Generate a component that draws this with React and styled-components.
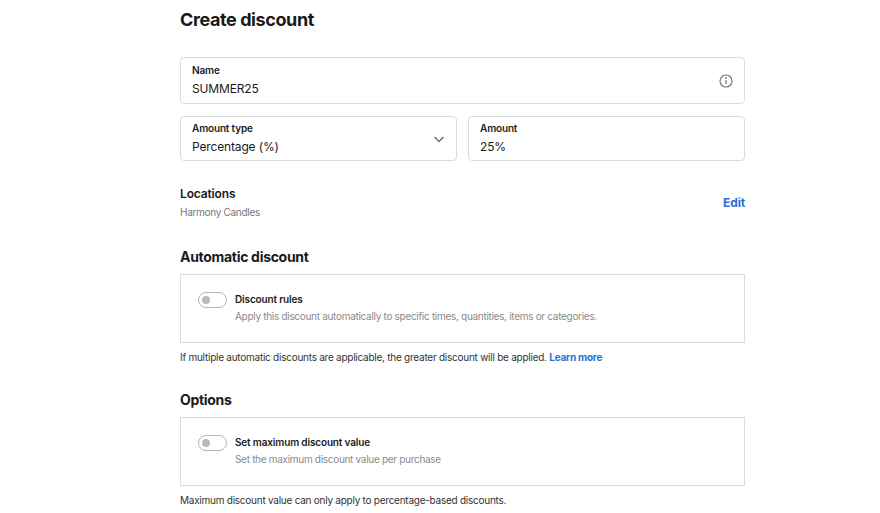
import React from "react";
import styled, { createGlobalStyle } from "styled-components";

const Global = createGlobalStyle`
  body { margin: 0; background: #fff; font-family: Inter, "Noto Sans", sans-serif; color: #1a1a1a; letter-spacing: -0.15px; }
`;
const Page = styled.div`width: 565px; margin-left: 180px; padding-top: 9px; display: flex; flex-direction: column;`;
const Title = styled.h1`font-size: 18px; font-weight: 700; margin: 0 0 26px; line-height: 22px; letter-spacing: -0.4px;`;
const Field = styled.div`
  border: 1px solid #dcdcdc; border-radius: 4px; height: 45px; box-sizing: border-box;
  padding: 6px 11px; display: flex; align-items: center; justify-content: space-between; flex: 1;
`;
const FieldText = styled.div`display: flex; flex-direction: column; gap: 4px;`;
const Label = styled.div`font-size: 10px; font-weight: 600; line-height: 13px;`;
const Value = styled.div`font-size: 12px; line-height: 16px;`;
const Row = styled.div`display: flex; gap: 11px; margin-top: 12px;`;
const Locations = styled.div`display: flex; justify-content: space-between; align-items: center; margin-top: 25px;`;
const LocTitle = styled.div`font-size: 12px; font-weight: 600; line-height: 16px;`;
const LocSub = styled.div`font-size: 10px; color: #777; margin-top: 4px; line-height: 13px; letter-spacing: -0.3px;`;
const Edit = styled.a`font-size: 12px; font-weight: 700; color: #2b6fd6;`;
const Heading = styled.h2`font-size: 14px; font-weight: 700; margin: ${p => p.$mt}px 0 8px; line-height: 18px; letter-spacing: -0.3px;`;
const Box = styled.div`border: 1px solid #dcdcdc; height: 69px; box-sizing: border-box; padding: 17px 17px; display: flex; gap: 8px;`;
const Toggle = styled.div`
  width: 29px; height: 16px; border: 1px solid #b5b5b5; border-radius: 9px; box-sizing: border-box; position: relative; flex-shrink: 0;
  &::after { content: ""; position: absolute; left: 3px; top: 3px; width: 8px; height: 8px; border-radius: 50%; background: #b9b9b9; }
`;
const BoxTitle = styled.div`font-size: 10px; font-weight: 600; line-height: 14px;`;
const BoxSub = styled.div`font-size: 10px; color: #8a8a8a; margin-top: 4px; line-height: 13px; letter-spacing: -0.3px;`;
const Note = styled.p`font-size: 10px; margin: 8px 0 0; line-height: 13px; color: #333; letter-spacing: -0.25px;`;
const Link = styled.a`color: #2b6fd6; font-weight: 700;`;

export default function App() {
  return (
    <>
      <Global />
      <Page>
        <Title>Create discount</Title>
        <Field>
          <FieldText><Label>Name</Label><Value>SUMMER25</Value></FieldText>
          <svg width="14" height="14" viewBox="0 0 14 14" fill="none" stroke="#777" strokeWidth="1.2">
            <circle cx="7" cy="7" r="6" /><path d="M7 6v4" /><circle cx="7" cy="4" r="0.4" fill="#777" />
          </svg>
        </Field>
        <Row>
          <Field>
            <FieldText><Label>Amount type</Label><Value>Percentage (%)</Value></FieldText>
            <svg width="12" height="8" viewBox="0 0 12 8" fill="none" stroke="#666" strokeWidth="1.3"><path d="M1.5 2l4.5 4.5L10.5 2" /></svg>
          </Field>
          <Field>
            <FieldText><Label>Amount</Label><Value>25%</Value></FieldText>
          </Field>
        </Row>
        <Locations>
          <div><LocTitle>Locations</LocTitle><LocSub>Harmony Candles</LocSub></div>
          <Edit>Edit</Edit>
        </Locations>
        <Heading $mt={29}>Automatic discount</Heading>
        <Box>
          <Toggle />
          <div><BoxTitle>Discount rules</BoxTitle><BoxSub>Apply this discount automatically to specific times, quantities, items or categories.</BoxSub></div>
        </Box>
        <Note>If multiple automatic discounts are applicable, the greater discount will be applied. <Link>Learn more</Link></Note>
        <Heading $mt={27}>Options</Heading>
        <Box>
          <Toggle />
          <div><BoxTitle>Set maximum discount value</BoxTitle><BoxSub>Set the maximum discount value per purchase</BoxSub></div>
        </Box>
        <Note>Maximum discount value can only apply to percentage-based discounts.</Note>
      </Page>
    </>
  );
}
